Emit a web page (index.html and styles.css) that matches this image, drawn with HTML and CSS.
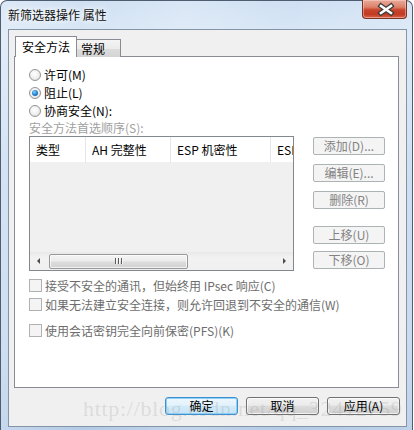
FILE: index.html
```html
<!DOCTYPE html>
<html lang="zh-CN">
<head>
<meta charset="utf-8">
<title>新筛选器操作 属性</title>
<link rel="stylesheet" href="styles.css">
</head>
<body>
<div class="window">
  <div class="titlebar">
    <span class="title">新筛选器操作 属性</span>
    <div class="close">
      <svg width="45" height="19" viewBox="0 0 45 19">
        <path d="M19 6 L29 13 M29 6 L19 13" stroke="#3a3a3a" stroke-width="5" stroke-linecap="square" fill="none"/>
        <path d="M19 6 L29 13 M29 6 L19 13" stroke="#ffffff" stroke-width="2.6" stroke-linecap="square" fill="none"/>
      </svg>
    </div>
  </div>
  <div class="client">
    <div class="tabs">
      <div class="tab active">安全方法</div>
      <div class="tab">常规</div>
    </div>
    <div class="panel">
      <div class="opt-row"><span class="radio"></span><span>许可(M)</span></div>
      <div class="opt-row"><span class="radio checked"></span><span>阻止(L)</span></div>
      <div class="opt-row"><span class="radio"></span><span>协商安全(N):</span></div>
      <div class="group-label">安全方法首选顺序(S):</div>
      <div class="list-area">
        <div class="list">
          <div class="list-header">
            <div class="col c1">类型</div>
            <div class="col c2">AH 完整性</div>
            <div class="col c3">ESP 机密性</div>
            <div class="col c4">ESI</div>
          </div>
          <div class="list-body"></div>
          <div class="hscroll">
            <div class="arrow-box"><span class="tri-left"></span></div>
            <div class="thumb"><span class="grip"></span><span class="grip"></span><span class="grip"></span></div>
            <div class="track"></div>
            <div class="arrow-box"><span class="tri-right"></span></div>
          </div>
        </div>
        <div class="side-buttons">
          <div class="sbtn">添加(D)...</div>
          <div class="sbtn">编辑(E)...</div>
          <div class="sbtn">删除(R)</div>
          <div class="sbtn gap-big">上移(U)</div>
          <div class="sbtn gap-small">下移(O)</div>
        </div>
      </div>
      <div class="checks">
        <div class="chk-row"><span class="chk"></span><span>接受不安全的通讯，但始终用 IPsec 响应(C)</span></div>
        <div class="chk-row"><span class="chk"></span><span>如果无法建立安全连接，则允许回退到不安全的通信(W)</span></div>
        <div class="chk-row spaced"><span class="chk"></span><span>使用会话密钥完全向前保密(PFS)(K)</span></div>
      </div>
    </div>
    <div class="dialog-buttons">
      <div class="btn default">确定</div>
      <div class="btn">取消</div>
      <div class="btn">应用(A)</div>
    </div>
  </div>
  <div class="watermark">http://blog.csdn.net/qq_32412759</div>
</div>
</body>
</html>
```
FILE: styles.css
```css
html, body {
  margin: 0;
  padding: 0;
  background: #ffffff;
}
body {
  width: 414px;
  height: 430px;
  overflow: hidden;
  font-family: "Noto Sans CJK SC", "Noto Sans", sans-serif;
  font-size: 12px;
  color: #000;
}
.window {
  position: relative;
  box-sizing: border-box;
  width: 413px;
  height: 430px;
  border: 1px solid #4f5d70;
  border-bottom: none;
  border-radius: 7px 7px 0 0;
  background:
    linear-gradient(90deg, rgba(255,255,255,0.25) 0%, rgba(255,255,255,0) 20%, rgba(255,255,255,0.2) 45%, rgba(255,255,255,0) 70%, rgba(255,255,255,0.15) 100%),
    linear-gradient(180deg, #cfe0f3 0%, #d9e7f6 8%, #c6daf0 40%, #bfd5ed 80%, #b3cbe6 100%);
  padding: 0 5px 3px 7px;
  display: flex;
  flex-direction: column;
}
.titlebar {
  height: 28px;
  display: flex;
  justify-content: space-between;
  align-items: flex-start;
}
.title {
  margin: 5px 0 0 0;
  line-height: 18px;
  font-size: 12px;
  color: #111;
  text-shadow: 0 0 5px #fff, 0 0 9px #fff;
}
.close {
  width: 45px;
  height: 19px;
  margin-top: -1px;
  box-sizing: border-box;
  border: 1px solid #7a3326;
  border-top: none;
  border-radius: 0 0 4px 4px;
  background: linear-gradient(180deg, #e9ab9b 0%, #dc8068 40%, #c9442c 55%, #c23b23 80%, #d9674c 100%);
  box-shadow: inset 0 0 0 1px rgba(255,220,210,0.45);
  overflow: hidden;
}
.close svg {
  display: block;
  margin-left: -1px;
}
.client {
  flex: 1;
  box-sizing: border-box;
  background: #f0f0f0;
  border: 1px solid #8493a6;
  padding: 6px 6px 0 5px;
  display: flex;
  flex-direction: column;
}
.tabs {
  display: flex;
  align-items: flex-end;
  height: 21px;
  margin-left: 1px;
  position: relative;
  z-index: 2;
}
.tab {
  box-sizing: border-box;
  height: 18px;
  width: 44px;
  border: 1px solid #898c95;
  border-bottom: none;
  border-left: none;
  background: linear-gradient(180deg, #f4f4f4 0%, #ebebeb 50%, #dddddd 51%, #d4d4d4 100%);
  padding-left: 4px;
  line-height: 18px;
}
.tab.active {
  height: 21px;
  width: 62px;
  border-left: 1px solid #898c95;
  background: #fff;
  padding-left: 6px;
  line-height: 19px;
}
.panel {
  box-sizing: border-box;
  width: 385px;
  height: 332px;
  margin-top: -1px;
  background: #fff;
  border: 1px solid #898c95;
  padding: 9px 0 0 14px;
  position: relative;
  z-index: 1;
}
.opt-row {
  display: flex;
  align-items: center;
  height: 18px;
  line-height: 18px;
}
.radio {
  box-sizing: border-box;
  width: 12px;
  height: 12px;
  border-radius: 50%;
  border: 1px solid #949494;
  background: radial-gradient(circle at 45% 40%, #ffffff 0%, #f2f2f2 45%, #d6d6d6 100%);
  margin-right: 3px;
  position: relative;
}
.radio.checked::after {
  content: "";
  position: absolute;
  left: 2px;
  top: 2px;
  width: 6px;
  height: 6px;
  border-radius: 50%;
  background: radial-gradient(circle at 40% 35%, #8fd3ff 0%, #2a8ad4 45%, #0b4f9a 100%);
}
.group-label {
  height: 16px;
  line-height: 16px;
  color: #a0a0a0;
}
.list-area {
  display: flex;
  align-items: flex-start;
}
.list {
  box-sizing: border-box;
  width: 265px;
  height: 135px;
  border: 1px solid #828790;
  display: flex;
  flex-direction: column;
}
.list-header {
  display: flex;
  height: 25px;
  background: #fff;
  overflow: hidden;
}
.col {
  box-sizing: border-box;
  padding-left: 6px;
  line-height: 25px;
  border-right: 1px solid #e3e6ea;
  white-space: nowrap;
  overflow: hidden;
}
.c1 { width: 56px; }
.c2 { width: 85px; }
.c3 { width: 100px; }
.c4 { flex: 1; border-right: none; }
.list-body {
  height: 90px;
  background: #f0f0f0;
}
.hscroll {
  height: 18px;
  display: flex;
  align-items: center;
  background: linear-gradient(180deg, #e8e8e8 0%, #f2f2f2 30%, #f0f0f0 100%);
}
.arrow-box {
  width: 17px;
  height: 18px;
  display: flex;
  align-items: center;
  justify-content: center;
}
.tri-left {
  width: 0;
  height: 0;
  border-top: 3px solid transparent;
  border-bottom: 3px solid transparent;
  border-right: 3px solid #4d4d4d;
}
.tri-right {
  width: 0;
  height: 0;
  border-top: 3px solid transparent;
  border-bottom: 3px solid transparent;
  border-left: 3px solid #4d4d4d;
}
.thumb {
  box-sizing: border-box;
  width: 139px;
  height: 15px;
  margin-left: 2px;
  border: 1px solid #989898;
  border-radius: 2px;
  background: linear-gradient(180deg, #f5f5f5 0%, #ececec 45%, #dcdcdc 55%, #d2d2d2 100%);
  box-shadow: inset 0 0 0 1px rgba(255,255,255,0.7);
  display: flex;
  justify-content: center;
  align-items: center;
  gap: 1px;
}
.grip {
  width: 1px;
  height: 6px;
  background: #5a5a5a;
  border-right: 1px solid #f8f8f8;
}
.track {
  flex: 1;
}
.side-buttons {
  margin-left: 19px;
  padding-top: 1px;
  display: flex;
  flex-direction: column;
  gap: 9px;
}
.sbtn {
  box-sizing: border-box;
  width: 72px;
  height: 18px;
  border: 1px solid #adb2b5;
  border-radius: 2px;
  background: #f4f4f4;
  color: #838383;
  text-align: center;
  line-height: 16px;
  white-space: nowrap;
}
.sbtn.gap-big { margin-top: 8px; }
.sbtn.gap-small { margin-top: -2px; }
.checks {
  margin-top: 5px;
}
.chk-row {
  display: flex;
  align-items: center;
  height: 19px;
  line-height: 19px;
  color: #6d6d6d;
  white-space: nowrap;
}
.chk-row.spaced {
  margin-top: 7px;
}
.chk {
  box-sizing: border-box;
  width: 13px;
  height: 13px;
  border: 1px solid #b1b1b1;
  background: #f4f4f4;
  margin-right: 3px;
  flex: none;
}
.dialog-buttons {
  display: flex;
  justify-content: flex-end;
  gap: 8px;
  margin-top: 9px;
}
.btn {
  box-sizing: border-box;
  width: 73px;
  height: 18px;
  border: 1px solid #707070;
  border-radius: 3px;
  background: linear-gradient(180deg, #f2f2f2 0%, #ebebeb 45%, #dddddd 50%, #cfcfcf 100%);
  box-shadow: inset 0 0 0 1px rgba(255,255,255,0.75);
  text-align: center;
  line-height: 16px;
}
.btn.default {
  border-color: #3c8fd0;
  background: linear-gradient(180deg, #eef7fd 0%, #e3f2fc 45%, #d3ebf9 50%, #c8e4f6 100%);
  box-shadow: inset 0 0 0 1px #8fd0f6;
}
.watermark {
  position: absolute;
  left: 82px;
  top: 396px;
  font-family: "Liberation Serif", "DejaVu Serif", serif;
  font-size: 22px;
  letter-spacing: 0.7px;
  line-height: 24px;
  color: rgba(150, 150, 150, 0.24);
  white-space: nowrap;
  pointer-events: none;
}
```
